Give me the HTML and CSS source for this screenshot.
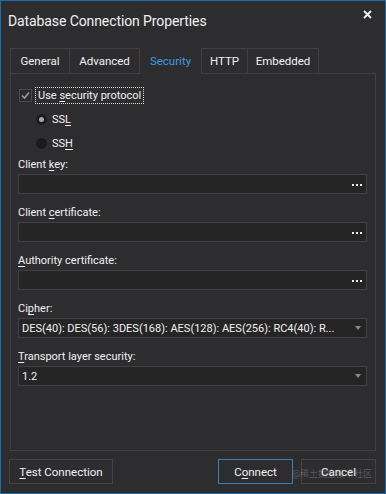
FILE: index.html
```html
<!DOCTYPE html>
<html>
<head>
<meta charset="utf-8">
<link rel="stylesheet" href="styles.css">
</head>
<body>
<div class="window">
  <div class="titlebar">
    <span class="title">Database Connection Properties</span>
    <svg class="close" width="9" height="9" viewBox="0 0 9 9"><path d="M1 1 L8 8 M8 1 L1 8" stroke="#f1f1f1" stroke-width="1.8" fill="none"/></svg>
  </div>
  <div class="tabs">
    <div class="tab t-general">General</div>
    <div class="tab t-advanced">Advanced</div>
    <div class="tab t-security active">Security</div>
    <div class="tab t-http">HTTP</div>
    <div class="tab t-embedded">Embedded</div>
  </div>
  <div class="panel">
    <div class="check-row">
      <span class="checkbox"><svg width="11" height="11" viewBox="0 0 11 11"><path d="M2 5.5 L4.5 8 L9 2.5" stroke="#9a9a9a" stroke-width="1.6" fill="none"/></svg></span>
      <span class="focus">Use <u>s</u>ecurity protocol</span>
    </div>
    <div class="radio-row first">
      <span class="radio on"></span><span>SS<u>L</u></span>
    </div>
    <div class="radio-row">
      <span class="radio"></span><span>SS<u>H</u></span>
    </div>
    <div class="field">
      <div class="label">Client <u>k</u>ey:</div>
      <div class="input"><span class="dots"><i></i><i></i><i></i></span></div>
    </div>
    <div class="field">
      <div class="label">Client <u>c</u>ertificate:</div>
      <div class="input"><span class="dots"><i></i><i></i><i></i></span></div>
    </div>
    <div class="field">
      <div class="label"><u>A</u>uthority certificate:</div>
      <div class="input"><span class="dots"><i></i><i></i><i></i></span></div>
    </div>
    <div class="field">
      <div class="label">Ci<u>p</u>her:</div>
      <div class="input select"><span class="value">DES(40): DES(56): 3DES(168): AES(128): AES(256): RC4(40): R...</span><span class="arrow"></span></div>
    </div>
    <div class="field">
      <div class="label"><u>T</u>ransport layer security:</div>
      <div class="input select"><span class="value">1.2</span><span class="arrow"></span></div>
    </div>
  </div>
  <div class="footer">
    <button class="btn btn-test"><u>T</u>est Connection</button>
    <div class="spacer"></div>
    <button class="btn btn-connect default">C<u>o</u>nnect</button>
    <button class="btn btn-cancel">Cancel</button>
    <span class="watermark">@稀土掘金技术社区</span>
  </div>
</div>
</body>
</html>
```
FILE: styles.css
```css
html, body {
  margin: 0;
  padding: 0;
  background: #2d2d30;
}
body {
  font-family: Roboto, "Noto Sans", "Noto Sans CJK SC", sans-serif;
  font-size: 11px;
  color: #f1f1f1;
}
u { text-decoration: underline; text-underline-offset: 2px; }
.window {
  position: relative;
  width: 386px;
  height: 494px;
  box-sizing: border-box;
  border: 1px solid #1c6aa6;
  background: #2d2d30;
  display: flex;
  flex-direction: column;
}
.titlebar {
  height: 47px;
  display: flex;
  align-items: flex-start;
  justify-content: space-between;
}
.title {
  font-size: 14px;
  letter-spacing: -0.1px;
  margin: 10px 0 0 7px;
  line-height: 20px;
  color: #f1f1f1;
}
.close {
  margin: 9px 13px 0 0;
}
.tabs {
  display: flex;
  margin-left: 9px;
  height: 25px;
  position: relative;
  z-index: 1;
}
.tab {
  box-sizing: border-box;
  height: 25px;
  border: 1px solid #3f3f46;
  border-right: none;
  border-bottom: none;
  display: flex;
  align-items: center;
  justify-content: center;
  color: #f1f1f1;
  font-size: 11.5px;
  padding-bottom: 1px;
}
.t-general { width: 59px; }
.t-advanced { width: 70px; }
.t-security { width: 62px; }
.t-http { width: 46px; }
.t-embedded { width: 72px; border-right: 1px solid #3f3f46; }
.tab.active {
  color: #3f9be2;
  border-top-color: #2d2d30;
  height: 26px;
  background: #2d2d30;
}
.panel {
  margin: 0 9px;
  height: 378px;
  box-sizing: border-box;
  border: 1px solid #3f3f46;
  padding: 13px 8px 0 7px;
  display: flex;
  flex-direction: column;
}
.check-row {
  display: flex;
  align-items: center;
  height: 16px;
}
.checkbox {
  width: 11px;
  height: 11px;
  border: 1px solid #4a4a50;
  background: #2a2a2d;
  margin-left: 1px;
  display: flex;
}
.focus {
  margin-left: 4px;
  height: 15px;
  line-height: 15px;
  padding: 0 2px;
  outline: 1px dotted #e0e0e0;
}
.radio-row {
  display: flex;
  align-items: center;
  height: 24px;
  padding-left: 17px;
}
.radio-row.first { margin-top: 4px; }
.radio {
  width: 11px;
  height: 11px;
  border-radius: 50%;
  background: #1b1b1c;
  border: 1px solid #333336;
  margin-right: 4px;
  display: flex;
  align-items: center;
  justify-content: center;
}
.radio.on::after {
  content: "";
  width: 5px;
  height: 5px;
  border-radius: 50%;
  background: #a8a8a8;
}
.field {
  display: flex;
  flex-direction: column;
  margin-bottom: 9px;
}
.label {
  height: 16px;
  line-height: 16px;
  margin-top: 2px;
  margin-bottom: 1px;
  color: #f1f1f1;
}
.input {
  height: 20px;
  box-sizing: border-box;
  border: 1px solid #3f3f46;
  background: #252526;
  display: flex;
  align-items: center;
  justify-content: flex-end;
}
.dots {
  display: flex;
  gap: 2px;
  margin-right: 4px;
  margin-top: 1px;
}
.dots i {
  width: 2px;
  height: 2px;
  background: #f1f1f1;
}
.select {
  justify-content: space-between;
}
.value {
  padding-left: 3px;
  white-space: nowrap;
  overflow: hidden;
}
.arrow {
  width: 0;
  height: 0;
  border-left: 3.5px solid transparent;
  border-right: 3.5px solid transparent;
  border-top: 4px solid #8a8a8a;
  margin-right: 5px;
  flex-shrink: 0;
}
.footer {
  display: flex;
  margin: 8px 9px 0 8px;
  position: relative;
}
.spacer { flex: 1; }
.btn {
  height: 25px;
  box-sizing: border-box;
  background: #2d2d30;
  border: 1px solid #434346;
  color: #f1f1f1;
  font: inherit;
  font-size: 11.5px;
  padding: 0;
}
.btn-test { width: 104px; }
.btn-connect { width: 75px; margin-right: 8px; }
.btn-cancel { width: 75px; }
.btn.default { border-color: #3c7fb1; }
.watermark {
  position: absolute;
  right: 4px;
  top: 8px;
  font-size: 9px;
  color: rgba(200, 200, 200, 0.3);
  pointer-events: none;
}
```
